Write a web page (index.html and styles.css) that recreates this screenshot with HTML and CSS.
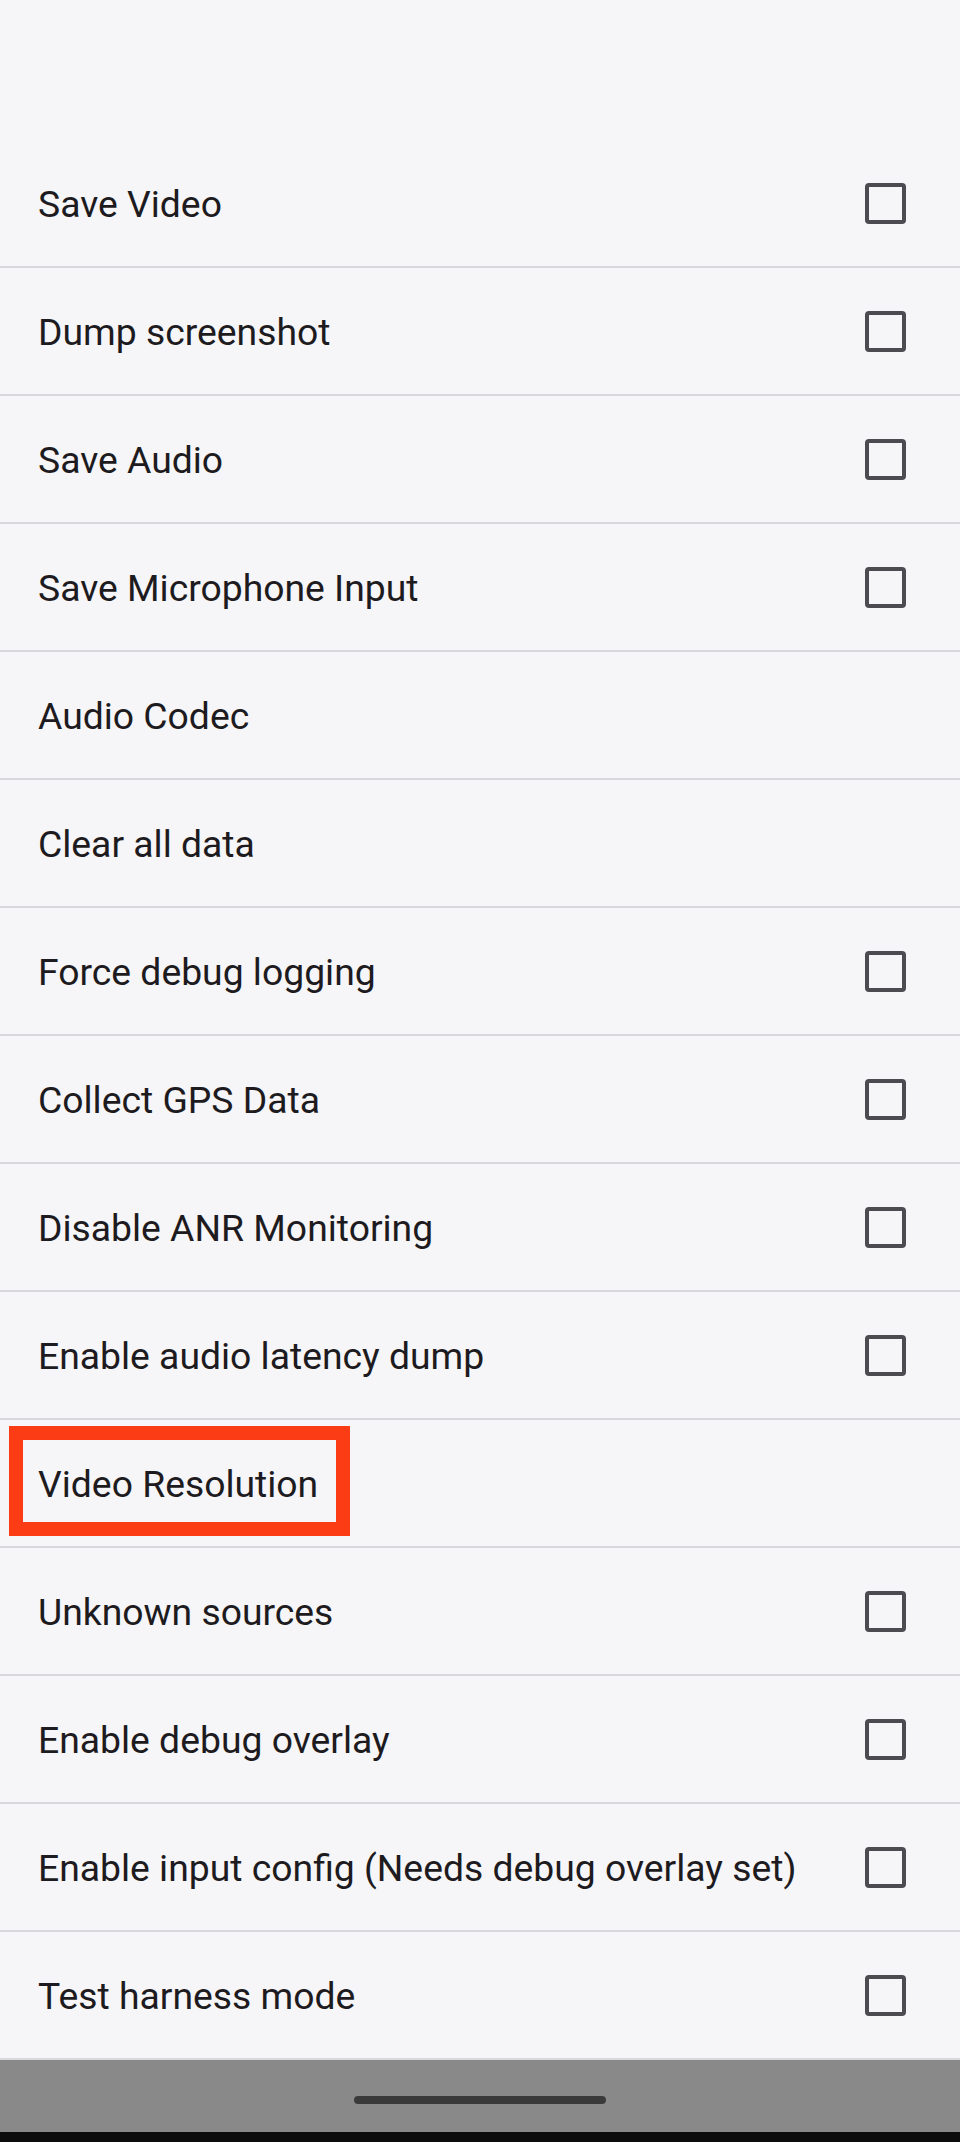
FILE: index.html
```html
<!DOCTYPE html>
<html>
<head>
<meta charset="utf-8">
<link rel="stylesheet" href="styles.css">
</head>
<body>
<div class="screen">
  <div class="top-space"></div>
  <ul class="list">
    <li class="row"><span class="label">Save Video</span><span class="check"></span></li>
    <li class="row"><span class="label">Dump screenshot</span><span class="check"></span></li>
    <li class="row"><span class="label">Save Audio</span><span class="check"></span></li>
    <li class="row"><span class="label">Save Microphone Input</span><span class="check"></span></li>
    <li class="row"><span class="label">Audio Codec</span></li>
    <li class="row"><span class="label">Clear all data</span></li>
    <li class="row"><span class="label">Force debug logging</span><span class="check"></span></li>
    <li class="row"><span class="label">Collect GPS Data</span><span class="check"></span></li>
    <li class="row"><span class="label">Disable ANR Monitoring</span><span class="check"></span></li>
    <li class="row"><span class="label">Enable audio latency dump</span><span class="check"></span></li>
    <li class="row highlighted"><span class="label">Video Resolution</span><span class="highlight-box"></span></li>
    <li class="row"><span class="label">Unknown sources</span><span class="check"></span></li>
    <li class="row"><span class="label">Enable debug overlay</span><span class="check"></span></li>
    <li class="row"><span class="label">Enable input config (Needs debug overlay set)</span><span class="check"></span></li>
    <li class="row"><span class="label">Test harness mode</span><span class="check"></span></li>
  </ul>
  <div class="navbar"><span class="pill"></span></div>
  <div class="bottom-strip"></div>
</div>
</body>
</html>
```

FILE: styles.css
```css
* { box-sizing: border-box; }
html, body {
  margin: 0;
  padding: 0;
  background: #f6f5f8;
}
.screen {
  width: 960px;
  height: 2142px;
  display: flex;
  flex-direction: column;
  background: #f6f5f8;
  font-family: Roboto, "Liberation Sans", sans-serif;
  overflow: hidden;
}
.top-space {
  height: 140px;
  flex: none;
}
.list {
  list-style: none;
  margin: 0;
  padding: 0;
}
.row {
  position: relative;
  height: 128px;
  display: flex;
  align-items: center;
  justify-content: space-between;
  padding: 0 54px 0 38px;
  border-bottom: 2px solid #d9d8dc;
}
.label {
  font-size: 37.3px;
  color: #1d1b20;
  line-height: 1;
  padding-top: 3px;
}
.check {
  width: 41px;
  height: 41px;
  border: 4px solid #4d4b52;
  border-radius: 4px;
  flex: none;
}
.highlight-box {
  position: absolute;
  left: 9px;
  top: 6px;
  width: 341px;
  height: 110px;
  border: 14px solid #fc3c14;
}
.navbar {
  height: 72px;
  flex: none;
  background: #8a8989;
  display: flex;
  align-items: center;
  justify-content: center;
}
.pill {
  width: 252px;
  height: 8px;
  border-radius: 4px;
  background: #3a3a3a;
  margin-top: 8px;
}
.bottom-strip {
  height: 10px;
  flex: none;
  background: #0d0d0d;
}
```
